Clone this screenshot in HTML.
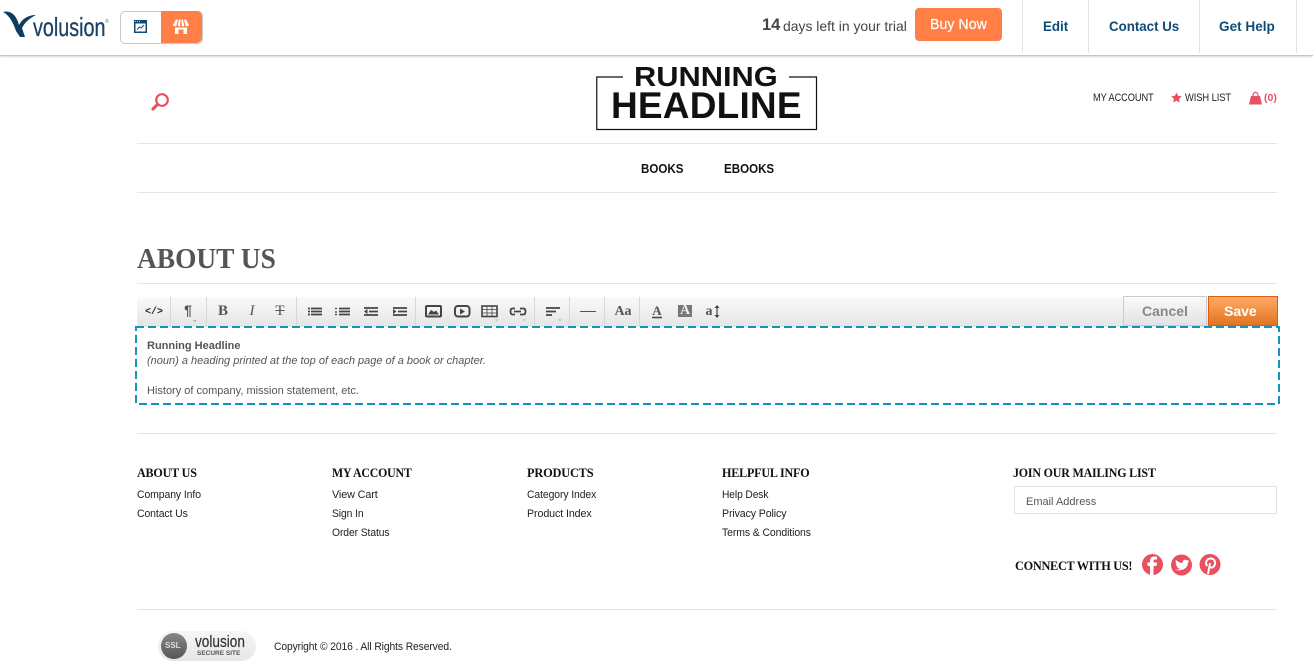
<!DOCTYPE html>
<html><head><meta charset="utf-8"><style>
html,body{margin:0;padding:0;background:#fff;width:1313px;height:669px;overflow:hidden}
body{position:relative;font-family:"Liberation Sans",sans-serif;color:#222}
.t{position:absolute;white-space:nowrap;transform-origin:0 50%;line-height:16px}
.r{position:absolute}
.s{font-size:11px;color:#222;transform:scaleX(.94);letter-spacing:-.1px}
.h{font-family:"Liberation Serif",serif;font-weight:bold;font-size:13px;color:#111;letter-spacing:-.2px;transform:scaleX(.93)}
.nav{font-size:14px;font-weight:bold;color:#0f4c75;transform:scaleX(.95)}
.ic{position:absolute;top:297px;height:30px;width:30px;text-align:center;line-height:29px;font-family:"Liberation Serif",serif;color:#555;font-size:13px}
.sep{position:absolute;top:297px;width:1px;height:30px;background:#d8d8d8}
.hr{position:absolute;left:137px;width:1140px;height:1px;background:#e4e4e4}
</style></head><body>

<!-- top bar -->
<div class="r" style="left:0;top:0;width:1313px;height:55px;background:#fff;border-bottom:1px solid #c4c4c4;box-shadow:0 1px 2px rgba(0,0,0,.15)"></div>
<svg class="r" style="left:3px;top:10px" width="34" height="29" viewBox="0 0 34 29"><path d="M0 2C7 0 13 4 16 15C19 9 25 5 33 5C27 8 22 12 19 18L22 27L17 27L13 21C10 12 6 5 0 2Z" fill="#0f3d5e"/></svg>
<div class="t" style="left:33px;top:14px;font-size:26px;line-height:26px;color:#1b4263;transform:scaleX(.76);-webkit-text-stroke:.3px #1b4263">volusion</div>
<div class="t" style="left:105px;top:19px;font-size:5px;line-height:6px;color:#777">®</div>
<div class="r" style="left:120px;top:11px;width:81px;height:31px;border:1px solid #c8c8c8;border-radius:5px;background:#fff"></div>
<div class="r" style="left:161px;top:11px;width:41px;height:32px;background:#ff7f47;border-radius:0 5px 5px 0"></div>
<svg class="r" style="left:134px;top:20px" width="13" height="13" viewBox="0 0 13 13"><rect width="13" height="13" fill="#0f4c75"/><path d="M1 1.5H2M3 1.5H4M5 1.5H6" stroke="#fff" stroke-width=".8"/><rect x="1.5" y="3.5" width="10" height="8" fill="#fff"/><path d="M3 9.5L5.5 7L7 8L10 5" stroke="#0f4c75" stroke-width="1" fill="none"/></svg>
<svg class="r" style="left:173px;top:19px" width="16" height="15" viewBox="0 0 16 15"><path d="M3 .5H5L3.5 6.5C3 7.5 .5 7.5 0 6ZM6 .5H7.5L7.2 6.5C7 7.5 5 7.5 4.8 6.5ZM8.5 .5H10L11.2 6.5C11 7.5 9 7.5 8.8 6.5ZM11 .5H13L16 6C15.5 7.5 13 7.5 12.5 6.5Z" fill="#fff"/><path d="M2 8.5H14V15H10.5V10.5H5.5V15H2Z" fill="#fff"/></svg>
<div class="t" style="left:762px;top:17px;font-size:16.5px;font-weight:bold;color:#444">14</div>
<div class="t" style="left:783px;top:18px;font-size:14px;color:#444;transform:scaleX(.995)">days left in your trial</div>
<div class="r" style="left:915px;top:8px;width:87px;height:33px;background:#ff7f47;border-radius:4px"></div>
<div class="t" style="left:930px;top:17px;font-size:14.5px;color:#fff;transform:scaleX(.98);-webkit-text-stroke:.2px #fff">Buy Now</div>
<div class="r" style="left:1022px;top:0;width:1px;height:53px;background:#e2e2e2"></div>
<div class="r" style="left:1088px;top:0;width:1px;height:53px;background:#e2e2e2"></div>
<div class="r" style="left:1199px;top:0;width:1px;height:53px;background:#e2e2e2"></div>
<div class="r" style="left:1296px;top:0;width:1px;height:53px;background:#e2e2e2"></div>
<div class="t nav" style="left:1043px;top:18px">Edit</div>
<div class="t nav" style="left:1109px;top:18px">Contact Us</div>
<div class="t nav" style="left:1219px;top:18px;transform:scaleX(.97)">Get Help</div>

<!-- header -->
<svg class="r" style="left:150px;top:91px" width="22" height="22" viewBox="0 0 22 22"><circle cx="12" cy="9" r="5.8" fill="none" stroke="#e8505f" stroke-width="2.2"/><path d="M7.5 13.5L3 18" stroke="#e8505f" stroke-width="3.2" stroke-linecap="round"/></svg>
<svg class="r" style="left:596px;top:76px" width="222" height="55" viewBox="0 0 222 55"><path d="M27 1H.75V53.5H220.5V1H193" fill="none" stroke="#111" stroke-width="1.2"/></svg>
<div class="t" style="left:634px;top:62px;font-size:28px;line-height:30px;font-weight:bold;color:#111;transform:scaleX(1.1)">RUNNING</div>
<div class="t" style="left:611px;top:89px;font-size:37px;line-height:34px;font-weight:bold;color:#111;letter-spacing:.2px">HEADLINE</div>
<div class="t s" style="left:1093px;top:90px;transform:scaleX(.84)">MY ACCOUNT</div>
<svg class="r" style="left:1171px;top:92px" width="11" height="11" viewBox="0 0 24 24"><path d="M12 1L15.5 8.5L23.5 9.5L17.5 15L19.2 23L12 19L4.8 23L6.5 15L.5 9.5L8.5 8.5Z" fill="#e8505f"/></svg>
<div class="t s" style="left:1185px;top:90px;transform:scaleX(.85)">WISH LIST</div>
<svg class="r" style="left:1249px;top:91px" width="13" height="14" viewBox="0 0 13 14"><path d="M4 5C4 0 9 0 9 5" fill="none" stroke="#e8505f" stroke-width="1.2"/><path d="M2 5H11L13 13.5H0Z" fill="#e8505f"/></svg>
<div class="t" style="left:1264px;top:90px;font-size:10.5px;font-weight:bold;color:#e8505f">(0)</div>
<div class="hr" style="top:143px"></div>
<div class="t" style="left:641px;top:161px;font-size:13px;font-weight:bold;color:#111;transform:scaleX(.89)">BOOKS</div>
<div class="t" style="left:724px;top:161px;font-size:13px;font-weight:bold;color:#111;transform:scaleX(.89)">EBOOKS</div>
<div class="hr" style="top:192px"></div>

<div class="t" style="left:137px;top:243px;font-family:'Liberation Serif',serif;font-weight:bold;font-size:29px;line-height:32px;color:#555;transform:scaleX(.945)">ABOUT US</div>
<div class="hr" style="top:283px"></div>

<!-- toolbar -->
<div class="r" style="left:137px;top:297px;width:1141px;height:30px;background:linear-gradient(#fafafa,#e4e4e4)"></div>
<div class="sep" style="left:170px"></div><div class="sep" style="left:206px"></div><div class="sep" style="left:296px"></div><div class="sep" style="left:415px"></div><div class="sep" style="left:534px"></div><div class="sep" style="left:569px"></div><div class="sep" style="left:604px"></div><div class="sep" style="left:639px"></div>
<div class="ic" style="left:139px;top:298px;font:bold 10px/29px 'Liberation Mono',monospace;color:#222">&lt;/&gt;</div>
<div class="ic" style="left:173px;top:296px;font:bold 14px/29px 'Liberation Sans',sans-serif">¶</div>
<div class="ic" style="left:208px;font-weight:bold;font-size:15px">B</div>
<div class="ic" style="left:237px;font-style:italic;font-size:15px">I</div>
<div class="ic" style="left:265px;font-size:15px;text-decoration:line-through">T</div>
<svg class="r" style="left:300px;top:297px" width="430" height="30" viewBox="0 0 430 30">
<g fill="none" stroke="#444" stroke-width="1.8">
<path d="M11 11.5H22M11 14.5H22M11 17.5H22"/><path d="M8 11.5H10M8 14.5H10M8 17.5H10"/>
<path d="M39 11.5H50M39 14.5H50M39 17.5H50"/><path d="M35 11.5H37M35 15H37M35 17.5H37" stroke-width="1.3"/>
<path d="M64 11H78M69 14.5H78M64 18H78"/>
<path d="M93 11H107M98 14.5H107M93 18H107"/>
<rect x="126" y="9" width="15" height="10.5" rx="1" stroke-width="2"/>
<rect x="155" y="9" width="14.5" height="10.5" rx="3" stroke-width="2"/>
<rect x="182" y="9" width="15" height="10.5" stroke-width="1.6"/>
<path d="M182 12.5H197M182 16H197M187 9V19M192 9V19" stroke-width=".8"/>
<path d="M215 11.5H212.5Q210.5 11.5 210.5 14.5Q210.5 17.5 212.5 17.5H215M220 11.5H223.5Q225.5 11.5 225.5 14.5Q225.5 17.5 223.5 17.5H220M214 14.5H221" stroke-width="1.8"/>
<path d="M246 11H260M246 14.5H256M246 18H252" stroke-width="1.8"/>
<path d="M280 14.5H296" stroke="#555" stroke-width="1"/>
</g>
<path d="M128 17.5L131 13L134 15L136 13.5L139 17.5Z" fill="#444"/>
<path d="M160 11.5L165 14.5L160 17.5Z" fill="#444"/>
<path d="M64 14.5L67.5 12V17Z M93 12L96.5 14.5L93 17Z" fill="#444"/>
<rect x="378" y="8" width="14" height="12" fill="#777"/>
<path d="M352 20.5H362" stroke="#444" stroke-width="1.5"/>
<path d="M417 10V19" stroke="#444" stroke-width="1.2"/>
<path d="M414.5 11L417 8L419.5 11ZM414.5 18L417 21L419.5 18Z" fill="#444"/>
<path d="M195 22.5H198L196.5 24Z M223 22.5H226L224.5 24Z M258.5 22.5H261.5L260 24Z" fill="#aaa"/>
</svg>
<svg class="r" style="left:193px;top:320px" width="6" height="4"><path d="M0 0H3.5L1.75 2Z" fill="#aaa"/></svg>
<div class="ic" style="left:608px;font-weight:bold;font-size:14px">Aa</div>
<div class="ic" style="left:642px;font-weight:bold;font-size:13px;top:296px">A</div>
<div class="ic" style="left:670px;font-weight:bold;font-size:14px;color:#eee;top:296px">A</div>
<div class="ic" style="left:704px;font-weight:bold;font-size:14px;width:10px">a</div>
<div class="r" style="left:1123px;top:296px;width:84px;height:30px;box-sizing:border-box;border:1px solid #ccc;background:linear-gradient(#fafafa,#e2e2e4)"></div>
<div class="t" style="left:1142px;top:303px;font-size:14px;font-weight:bold;color:#888">Cancel</div>
<div class="r" style="left:1208px;top:296px;width:70px;height:30px;box-sizing:border-box;border:1px solid #e05c10;background:linear-gradient(#ffaa66,#e27420)"></div>
<div class="t" style="left:1224px;top:303px;font-size:14px;font-weight:bold;color:#fff">Save</div>

<!-- editor -->
<svg class="r" style="left:135px;top:326px" width="1145" height="79"><rect x="1" y="1" width="1143" height="77" fill="#fff" stroke="#0d96c0" stroke-width="2" stroke-dasharray="8 4"/></svg>
<div class="t" style="left:147px;top:338px;font-size:11px;font-weight:bold;color:#555">Running Headline</div>
<div class="t" style="left:147px;top:353px;font-size:11px;font-style:italic;color:#555">(noun) a heading printed at the top of each page of a book or chapter.</div>
<div class="t" style="left:147px;top:383px;font-size:11px;color:#555">History of company, mission statement, etc.</div>
<div class="hr" style="top:433px"></div>

<!-- footer -->
<div class="t h" style="left:137px;top:465px">ABOUT US</div>
<div class="t h" style="left:332px;top:465px;transform:scaleX(.91)">MY ACCOUNT</div>
<div class="t h" style="left:527px;top:465px;transform:scaleX(.95)">PRODUCTS</div>
<div class="t h" style="left:722px;top:465px;transform:scaleX(.93)">HELPFUL INFO</div>
<div class="t h" style="left:1013px;top:465px;transform:scaleX(.92)">JOIN OUR MAILING LIST</div>
<div class="t s" style="left:137px;top:487px;transform:scaleX(.95)">Company Info</div>
<div class="t s" style="left:137px;top:506px;transform:scaleX(.95)">Contact Us</div>
<div class="t s" style="left:332px;top:487px;transform:scaleX(.98)">View Cart</div>
<div class="t s" style="left:332px;top:506px">Sign In</div>
<div class="t s" style="left:332px;top:525px">Order Status</div>
<div class="t s" style="left:527px;top:487px;transform:scaleX(.945)">Category Index</div>
<div class="t s" style="left:527px;top:506px;transform:scaleX(.97)">Product Index</div>
<div class="t s" style="left:722px;top:487px;transform:scaleX(.93)">Help Desk</div>
<div class="t s" style="left:722px;top:506px;transform:scaleX(.96)">Privacy Policy</div>
<div class="t s" style="left:722px;top:525px;transform:scaleX(.95)">Terms &amp; Conditions</div>
<div class="r" style="left:1014px;top:486px;width:263px;height:28px;box-sizing:border-box;border:1px solid #e2e2e2"></div>
<div class="t s" style="left:1026px;top:494px;color:#555;transform:none;letter-spacing:0">Email Address</div>
<div class="t h" style="left:1015px;top:558px;letter-spacing:-.3px;transform:scaleX(.945)">CONNECT WITH US!</div>
<svg class="r" style="left:1142px;top:554px" width="80" height="22" viewBox="0 0 80 22">
<circle cx="10.5" cy="10.5" r="10.5" fill="#e8505f"/><path d="M11.5 21V12H14.5L15 8.5H11.5V7C11.5 6 12 5.5 13 5.5H15V2.5H12.5C9.5 2.5 8 4 8 6.5V8.5H5.5V12H8V21Z" fill="#fff"/>
<circle cx="39.5" cy="11" r="10.5" fill="#e8505f"/><path d="M33 15.5C37 17.5 46 16 46 8.5L47.5 7L45.7 7.3L47 5.8L45 6.5C43.5 5 40.3 5.8 40.5 9C38 9 35.5 7.5 34 6C33 8 34 9.5 35 10.3L33.7 10C33.8 11.5 35 12.5 36.2 12.8L35 12.9C35.5 14 36.5 14.5 37.7 14.6C36.5 15.5 35 15.8 33 15.5Z" fill="#fff"/>
<circle cx="68" cy="10.5" r="10.5" fill="#e8505f"/><path d="M66 20L68 9M65.3 12C62.5 9 65 4.5 68.5 4.5C72 4.5 73.8 7.5 72.8 10.5C72 13.5 69 14.5 67.5 12.5" fill="none" stroke="#fff" stroke-width="2"/>
</svg>
<div class="hr" style="top:609px"></div>

<!-- ssl -->
<div class="r" style="left:158px;top:631px;width:98px;height:30px;border-radius:15px;background:linear-gradient(#f7f7f7,#e6e6e6)"></div>
<div class="r" style="left:161px;top:633px;width:26px;height:26px;border-radius:13px;background:linear-gradient(#888,#555)"></div>
<div class="t" style="left:165px;top:638px;font-size:8px;font-weight:bold;color:#ddd">SSL</div>
<div class="t" style="left:195px;top:634px;font-size:17px;color:#333;transform:scaleX(.8);-webkit-text-stroke:.2px #333">volusion</div>
<div class="t" style="left:197px;top:650px;font-size:6.5px;line-height:8px;font-weight:bold;color:#555">SECURE SITE</div>
<div class="t s" style="left:274px;top:639px;transform:scaleX(.935)">Copyright © 2016 . All Rights Reserved.</div>
</body></html>
